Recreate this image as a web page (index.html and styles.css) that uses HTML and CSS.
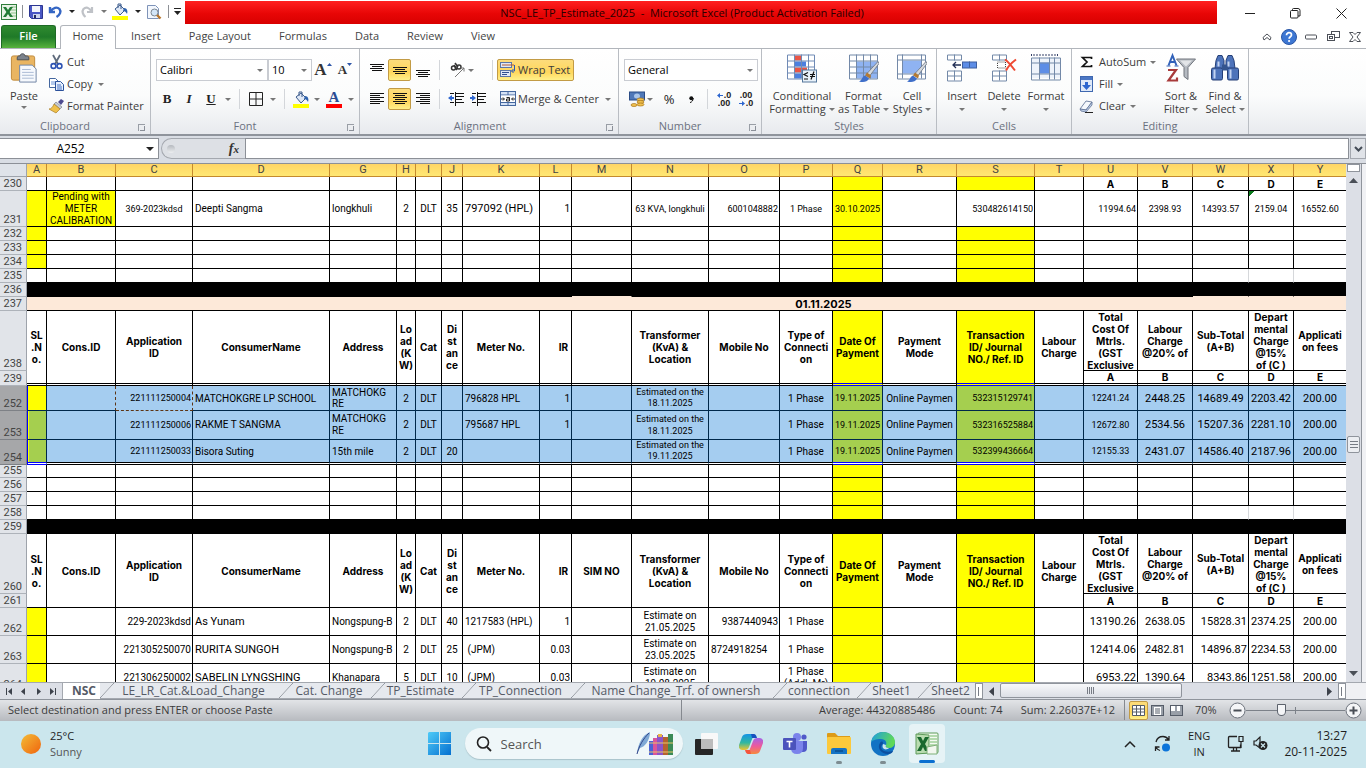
FILE: index.html
```html
<!DOCTYPE html>
<html lang="en">
<head>
<meta charset="utf-8">
<title>NSC_LE_TP_Estimate_2025 - Microsoft Excel</title>
<link rel="stylesheet" href="styles.css">
</head>
<body>
<header class="titlebar">
  <div class="qat">
    <svg class="qi" width="16" height="16" viewBox="0 0 16 16"><rect x=".5" y=".5" width="15" height="15" fill="#e8f3e6" stroke="#2f7d3b"/><path d="M10 3h5M10 6h5M10 9h5M10 12h5" stroke="#8cc088"/><path d="M2 3h3l2 3 2-3h3L8.600 8l3.400 5H9L7 10l-2 3H2l3.400-5z" fill="#217c35"/></svg>
    <i class="vsep"></i>
    <svg class="qi save" width="14" height="14" viewBox="0 0 14 14"><path d="M.5 .5h13v13h-11l-2-2z" fill="#4a57c4" stroke="#2c3691"/><rect x="3" y="1" width="8" height="6" fill="#f3f5fb"/><rect x="4" y="9" width="7" height="4" fill="#cdd5ee"/><rect x="5" y="10" width="2" height="3" fill="#222a5c"/></svg>
    <svg class="qi undo" width="15" height="14" viewBox="0 0 15 14"><path d="M2 2v5h5M2.500 6.500C5 2.500 9 1.500 11.500 4c2 2.500.5 6-3 8" fill="none" stroke="#3566c4" stroke-width="2.400"/></svg>
    <i class="arr dark"></i>
    <svg class="qi redo" width="15" height="14" viewBox="0 0 15 14"><path d="M12 2v5H7M11.500 6.500C9 2.500 6 1.500 3.500 4c-2 2.500-.5 6 2 8" fill="none" stroke="#bfc2c7" stroke-width="2.200"/></svg>
    <i class="arr"></i>
    <svg class="qi fill" width="17" height="17" viewBox="0 0 17 17"><path d="M3 6l5-4 5 5-5 5z" fill="#dfe8f6" stroke="#3b5b8c"/><path d="M6 5V1h3v5" fill="none" stroke="#3b5b8c"/><path d="M12 5c3 0 4 3 3 6-1-2-2-3-4-3z" fill="#2e62ad"/><rect x="0" y="13" width="16" height="4" fill="#ff0"/></svg>
    <i class="arr dark"></i>
    <svg class="qi prev" width="16" height="16" viewBox="0 0 16 16"><path d="M1.500 1.500h8l3 3v10h-11z" fill="#f3f7fd" stroke="#7e93b8"/><circle cx="8.500" cy="8.500" r="3.500" fill="#d3e6f8" stroke="#7d8793"/><path d="M11 11l3.500 3.500" stroke="#b8762c" stroke-width="2.400"/></svg>
    <i class="vsep"></i>
    <svg class="qi more" width="7" height="9" viewBox="0 0 7 9"><path d="M0 1.500h7" stroke="#222"/><path d="M0 4h7L3.500 8z" fill="#222"/></svg>
  </div>
  <h1 class="caption">NSC_LE_TP_Estimate_2025&nbsp; -&nbsp; Microsoft Excel (Product Activation Failed)</h1>
  <div class="winbtns">
    <button aria-label="Minimize"><svg width="11" height="11" viewBox="0 0 11 11"><path d="M0 5.500h10" stroke="#222"/></svg></button>
    <button aria-label="Restore"><svg width="11" height="11" viewBox="0 0 11 11"><rect x=".5" y="2.500" width="7.500" height="7.500" rx="1" fill="none" stroke="#222"/><path d="M2.500 2.500v-1q0-1 1-1H8q2 0 2 2v5.500h-2" fill="none" stroke="#222"/></svg></button>
    <button aria-label="Close"><svg width="11" height="11" viewBox="0 0 11 11"><path d="M.5.5l10 10M10.500.5l-10 10" stroke="#222"/></svg></button>
  </div>
</header>

<nav class="tabs">
  <button class="tab file">File</button>
  <button class="tab home">Home</button>
  <button class="tab">Insert</button>
  <button class="tab">Page Layout</button>
  <button class="tab">Formulas</button>
  <button class="tab">Data</button>
  <button class="tab">Review</button>
  <button class="tab">View</button>
  <div class="tabtools">
    <button aria-label="Collapse ribbon"><svg width="10" height="8" viewBox="0 0 10 8"><path d="M1 4.500L5 1l4 3.500L8 7 5 4.500 2 7z" fill="#fff" stroke="#4c5058"/></svg></button>
    <button aria-label="Help"><svg width="16" height="16" viewBox="0 0 16 16"><circle cx="8" cy="8" r="7.500" fill="#3d77d3" stroke="#2a56a5"/><path d="M5.500 6.200C5.500 2.800 10.500 3 10.500 6c0 1.800-2.400 1.800-2.400 3.800" fill="none" stroke="#fff" stroke-width="1.700"/><circle cx="8.100" cy="12" r="1.100" fill="#fff"/></svg></button>
    <button aria-label="Minimize workbook"><svg width="12" height="6" viewBox="0 0 12 6"><rect x=".5" y="1" width="11" height="4" rx="1" fill="#fff" stroke="#4c5058"/></svg></button>
    <button aria-label="Restore workbook"><svg width="13" height="11" viewBox="0 0 13 11"><rect x="4.500" y=".5" width="8" height="6" fill="#fff" stroke="#4c5058"/><rect x=".5" y="3.500" width="7" height="6" fill="#fff" stroke="#4c5058"/><rect x="2.500" y="5.500" width="3" height="2" fill="none" stroke="#4c5058"/></svg></button>
    <button aria-label="Close workbook"><svg width="12" height="10" viewBox="0 0 12 10"><path d="M.5.5H4l2 2 2-2h3.500L8 5l3.500 4.500H8l-2-2-2 2H.5L4 5z" fill="#fff" stroke="#4c5058"/></svg></button>
  </div>
</nav>

<section class="ribbon">
  <div class="group clipboard">
    <div class="gbody">
      <button class="big paste">
        <svg width="28" height="32" viewBox="0 0 28 32"><rect x="1" y="3" width="24" height="25" rx="2" fill="#e9b562" stroke="#c08a3b"/><path d="M7 5c0-2 2-2 3-2 0-3 5-3 5 0 2 0 4 0 4 2v2H7z" fill="#7c838c" stroke="#4a4f57"/><path d="M9.500 12.500h13l4 4V30h-17z" fill="#f6f9fd" stroke="#7184a4"/><path d="M12 17h9M12 20h12M12 23h12M12 26h12" stroke="#a9bad4"/></svg>
        <span>Paste</span><i class="arr"></i>
      </button>
      <div class="stack">
        <button class="small"><svg width="16" height="16" viewBox="0 0 16 16"><path d="M4 1l5 9M11 1L6 10" stroke="#5f6b7c" stroke-width="1.800"/><circle cx="4.500" cy="12" r="2.400" fill="none" stroke="#2d53b3" stroke-width="1.600"/><circle cx="10.500" cy="12" r="2.400" fill="none" stroke="#2d53b3" stroke-width="1.600"/></svg>Cut</button>
        <button class="small"><svg width="16" height="16" viewBox="0 0 16 16"><path d="M.5 2.500h6l3 3v6h-9z" fill="#fff" stroke="#44679f"/><path d="M2 6h5M2 8h5" stroke="#6c96d8"/><path d="M6.500 5.500h5l3 3v6h-8z" fill="#e8f0fc" stroke="#2b519b"/><path d="M8 9h4M8 11h5M8 13h5" stroke="#4773c4"/></svg>Copy<i class="arr"></i></button>
        <button class="small"><svg width="16" height="16" viewBox="0 0 16 16"><path d="M9 4l3-3 3 2-3 4z" fill="#4d4a8f"/><path d="M7 4l6 5-2 2-6-5z" fill="#c7ccd4" stroke="#6d7480" stroke-width=".6"/><path d="M5 6l6 5-4 4-7-4c2 0 4-2 5-5z" fill="#efc04b" stroke="#a97e24" stroke-width=".7"/></svg>Format Painter</button>
      </div>
    </div>
    <div class="glabel"><span>Clipboard</span><i class="launch"></i></div>
  </div>

  <div class="group font">
    <div class="gbody rows">
      <div class="row">
        <label class="combo face"><select aria-label="Font"><option>Calibri</option></select><i class="arr"></i></label><label class="combo size"><select aria-label="Font size"><option>10</option></select><i class="arr"></i></label>
        <button class="tb w22 grow" aria-label="Grow font">A<svg width="5" height="3" viewBox="0 0 5 3"><path d="M0 3h5L2.500 0z" fill="#2e56a8"/></svg></button>
        <button class="tb w22 grow sm" aria-label="Shrink font">A<svg width="5" height="3" viewBox="0 0 5 3"><path d="M0 0h5L2.500 3z" fill="#2e56a8"/></svg></button>
      </div>
      <div class="row">
        <button class="tb w22 serif b">B</button><button class="tb w22 serif it">I</button><button class="tb w22 serif un">U</button><button class="tb w12" aria-label="Underline options"><i class="arr"></i></button>
        <i class="rsep"></i>
        <button class="tb w22" aria-label="Borders"><svg width="14" height="14" viewBox="0 0 14 14"><path d="M.5.5h13v13H.5zM7 0v14M0 7h14" fill="none" stroke="#222"/></svg></button><button class="tb w12" aria-label="Border options"><i class="arr"></i></button>
        <i class="rsep"></i>
        <button class="tb w22" aria-label="Fill colour"><svg width="17" height="17" viewBox="0 0 17 17"><path d="M3 6l5-4 5 5-5 5z" fill="#dfe8f6" stroke="#3b5b8c"/><path d="M6 5V1h3v5" fill="none" stroke="#3b5b8c"/><path d="M12 5c3 0 4 3 3 6-1-2-2-3-4-3z" fill="#2e62ad"/><rect y="13" width="16" height="4" fill="#ff0"/></svg></button><button class="tb w10" aria-label="Fill options"><i class="arr"></i></button>
        <button class="tb fcol" aria-label="Font colour">A</button><button class="tb w10" aria-label="Font colour options"><i class="arr"></i></button>
      </div>
    </div>
    <div class="glabel"><span>Font</span><i class="launch"></i></div>
  </div>

  <div class="group align">
    <div class="gbody rows">
      <div class="row">
        <button class="tb w23" aria-label="Top align"><svg width="14" height="14" viewBox="0 0 14 14"><path d="M0 1.500h14M2 3.500h10M0 5.500h14M2 7.500h10" stroke="#111"/></svg></button>
        <button class="tb w23 on" aria-label="Middle align"><svg width="14" height="14" viewBox="0 0 14 14"><path d="M0 4.500h14M2 6.500h10M0 8.500h14M2 10.500h10" stroke="#111"/></svg></button>
        <button class="tb w23" aria-label="Bottom align"><svg width="14" height="14" viewBox="0 0 14 14"><path d="M0 7.500h14M2 9.500h10M0 11.500h14M2 13.500h10" stroke="#111"/></svg></button>
        <i class="rsep"></i>
        <button class="tb w34" aria-label="Orientation"><svg width="16" height="16" viewBox="0 0 16 16"><g fill="none" stroke="#333" stroke-width="1.500"><circle cx="3.500" cy="6" r="2"/><path d="M4 3l3 5"/><circle cx="9" cy="5" r="2"/><path d="M5 1l3 4"/></g><path d="M5 15L14 6M10.500 6H14v3.500" fill="none" stroke="#777"/></svg><i class="arr"></i></button>
        <i class="rsep tall"></i>
        <button class="tb wide on"><svg width="16" height="16" viewBox="0 0 16 16"><rect x=".5" y=".5" width="11" height="5" fill="#dfe8f6" stroke="#5b77a6"/><path d="M2 3h12" stroke="#b35a2d"/><rect x=".5" y="8.500" width="10" height="6" fill="#dfe8f6" stroke="#5b77a6"/><path d="M2 10.500h7M2 12.500h5" stroke="#2f4f8f"/><path d="M14.500 3v6h-3m2-2l-2 2 2 2" fill="none" stroke="#2c58b8"/></svg>Wrap Text</button>
      </div>
      <div class="row">
        <button class="tb w23" aria-label="Align left"><svg width="14" height="14" viewBox="0 0 14 14"><path d="M0 1.500h14M0 3.500h10M0 5.500h14M0 7.500h10M0 9.500h14M0 11.500h10" stroke="#111"/></svg></button>
        <button class="tb w23 on" aria-label="Centre"><svg width="14" height="14" viewBox="0 0 14 14"><path d="M0 1.500h14M2 3.500h10M0 5.500h14M2 7.500h10M0 9.500h14M2 11.500h10" stroke="#111"/></svg></button>
        <button class="tb w23" aria-label="Align right"><svg width="14" height="14" viewBox="0 0 14 14"><path d="M0 1.500h14M4 3.500h10M0 5.500h14M4 7.500h10M0 9.500h14M4 11.500h10" stroke="#111"/></svg></button>
        <i class="rsep"></i>
        <button class="tb w22" aria-label="Decrease indent"><svg width="16" height="14" viewBox="0 0 16 14"><path d="M2 1.500h4M8 1.500h8M7 4.500h9M7 7.500h7M8 10.500h8M2 10.500h4M7.500 0v14" stroke="#111"/><path d="M0 6l4-3v2h2v2H4v2z" fill="#2d66cf"/></svg></button>
        <button class="tb w22" aria-label="Increase indent"><svg width="16" height="14" viewBox="0 0 16 14"><path d="M2 1.500h4M8 1.500h8M7 4.500h9M7 7.500h7M8 10.500h8M2 10.500h4M7.500 0v14" stroke="#111"/><path d="M6 6L2 3v2H0v2h2v2z" fill="#2d66cf"/></svg></button>
        <i class="gap"></i>
        <button class="tb wide"><svg width="16" height="16" viewBox="0 0 16 16"><rect x=".5" y=".5" width="15" height="14" fill="#d5e2f5" stroke="#44679f"/><path d="M8 0v4M8 12v3M0 4h16M0 11.500h16" stroke="#44679f"/><rect x="1" y="4.500" width="14" height="6.500" fill="#fff"/><path d="M1 8h3M15 8h-3M3 6.500L4.500 8 3 9.500M13 6.500L11.500 8 13 9.500M6.500 6.500h3v3.500h-3V8h3" fill="none" stroke="#222"/></svg>Merge &amp; Center<i class="arr"></i></button>
      </div>
    </div>
    <div class="glabel"><span>Alignment</span><i class="launch"></i></div>
  </div>

  <div class="group number">
    <div class="gbody rows">
      <div class="row"><label class="combo fmt"><select aria-label="Number format"><option>General</option></select><i class="arr"></i></label></div>
      <div class="row">
        <button class="tb w34" aria-label="Accounting format"><svg width="16" height="16" viewBox="0 0 16 16"><rect x=".5" y="1" width="15" height="8" fill="#4f78b8" stroke="#2b4c86"/><ellipse cx="8" cy="5" rx="3" ry="2.500" fill="#a9c5ea"/><g fill="#f1c14d" stroke="#a8761e" stroke-width=".7"><ellipse cx="11.500" cy="8.500" rx="3.500" ry="1.500"/><ellipse cx="11.500" cy="11" rx="3.500" ry="1.500"/><ellipse cx="11.500" cy="13.500" rx="3.500" ry="1.500"/><ellipse cx="5" cy="14" rx="3" ry="1.500"/></g></svg><i class="arr"></i></button>
        <button class="tb w22 pct">%</button>
        <button class="tb w22 comma" aria-label="Comma style"><svg width="5" height="7" viewBox="0 0 5 7"><circle cx="2.300" cy="2.200" r="2" fill="#111"/><path d="M4.200 2C4.200 4.500 3 6 1 6.600" fill="none" stroke="#111"/></svg></button>
        <i class="rsep"></i>
        <button class="tb w22 dec" aria-label="Increase decimal"><span><svg width="6" height="5" viewBox="0 0 6 5"><path d="M0 2.500L3 0v2h3v1H3v2z" fill="#2d66cf"/></svg>.0</span><span>.00</span></button>
        <button class="tb w22 dec" aria-label="Decrease decimal"><span>.00</span><span><svg width="6" height="5" viewBox="0 0 6 5"><path d="M6 2.500L3 0v2H0v1h3v2z" fill="#2d66cf"/></svg>.0</span></button>
      </div>
    </div>
    <div class="glabel"><span>Number</span><i class="launch"></i></div>
  </div>

  <div class="group styles">
    <div class="gbody">
      <button class="big w72"><svg width="30" height="30" viewBox="0 0 30 30"><path d="M.5 1.500h27v24H.5z" fill="#fff"/><rect x="8" y="2" width="6" height="5" fill="#ea5545"/><rect x="8" y="8" width="11" height="5" fill="#4b7fe0"/><rect x="8" y="14" width="12" height="5" fill="#ea5545"/><rect x="8" y="20" width="6" height="5" fill="#4b7fe0"/><path d="M.5 1.500h27v24H.5zM.5 7.500h27M.5 13.500h27M.5 19.500h27M7.500 1v24M14.500 1v24M21.500 1v24" fill="none" stroke="#6f8ab5"/><rect x="15.500" y="16.500" width="14" height="12" fill="#e9f2fa" stroke="#55779b"/><path d="M21 19l-4 2 4 2M17 25.500h4M23 21h5M23 23h5M27 18l-3 8" fill="none" stroke="#111" stroke-width="1.200"/></svg><span>Conditional<br>Formatting <i class="arr"></i></span></button>
      <button class="big w50"><svg width="30" height="30" viewBox="0 0 30 30"><path d="M.5 1.500h28v24H.5z" fill="#fff"/><rect x="8" y="8" width="20" height="17" fill="#8fb3f2"/><path d="M.5 1.500h28v24H.5zM.5 7.500h28M.5 13.500h28M.5 19.500h28M7.500 1v24M14.500 1v24M21.500 1v24" fill="none" stroke="#7389a8"/><path d="M29 8l1 2-9 12-3-2z" fill="#d3d8de" stroke="#6c7480" stroke-width=".8"/><path d="M18 19l4 3-1 3-5-3z" fill="#b37a33"/><path d="M16 22l4 3c-2 4-6 4-10 3 3-1 3-5 6-6z" fill="#3f6fc9"/></svg><span>Format<br>as Table <i class="arr"></i></span></button>
      <button class="big w46"><svg width="30" height="30" viewBox="0 0 30 30"><path d="M.5 1.500h28v24H.5z" fill="#fff"/><rect x="6" y="7" width="18" height="13" fill="#8fb3f2"/><path d="M.5 1.500h28v24H.5zM.5 6.500h28M.5 20.500h28M5.500 1v24M24.500 1v24" fill="none" stroke="#7389a8"/><path d="M29 8l1 2-9 12-3-2z" fill="#d3d8de" stroke="#6c7480" stroke-width=".8"/><path d="M18 19l4 3-1 3-5-3z" fill="#b37a33"/><path d="M16 22l4 3c-2 4-6 4-10 3 3-1 3-5 6-6z" fill="#3f6fc9"/></svg><span>Cell<br>Styles <i class="arr"></i></span></button>
    </div>
    <div class="glabel"><span>Styles</span></div>
  </div>

  <div class="group cells">
    <div class="gbody">
      <button class="big w42"><svg width="30" height="30" viewBox="0 0 30 30"><path d="M.5 1.500h14v5H.5zM7.500 1v6M.5 17.500h14v10H.5zM7.500 17v10M.5 22.500h14" fill="#fff" stroke="#7389a8"/><rect x="15.500" y="8.500" width="14" height="6" fill="#5d8de6" stroke="#3d5f9f"/><path d="M22.500 8v6" stroke="#3d5f9f"/><path d="M6 11.500h8M9 8.500l-3 3 3 3" fill="none" stroke="#222f55" stroke-width="1.300"/></svg><span>Insert<br><i class="arr"></i></span></button>
      <button class="big w42"><svg width="30" height="30" viewBox="0 0 30 30"><path d="M3.500 1.500h14v5h-14zM10.500 1v6M3.500 17.500h14v10h-14zM10.500 17v10M3.500 22.500h14" fill="#fff" stroke="#7389a8"/><rect x="8.500" y="8.500" width="8" height="6" fill="none" stroke="#444" stroke-dasharray="1 1"/><path d="M16 6c4 3 7 7 10 11M27 6c-4 3-8 7-10 11" fill="none" stroke="#ee4a33" stroke-width="2"/></svg><span>Delete<br><i class="arr"></i></span></button>
      <button class="big w42"><svg width="30" height="30" viewBox="0 0 30 30"><path d="M.5.5v3M26.500.5v3M2 1.500h24" stroke="#333f66" stroke-dasharray="2 1"/><path d="M.5 4.500h29v20H.5z" fill="#eef3fb"/><rect x="9" y="9" width="9" height="11" fill="#5d8de6"/><path d="M.5 4.500h29v22H.5zM.5 9.500h29M.5 20.500h29M8.500 4v22M18.500 4v22M23.500 4v22" fill="none" stroke="#7389a8"/></svg><span>Format<br><i class="arr"></i></span></button>
    </div>
    <div class="glabel"><span>Cells</span></div>
  </div>

  <div class="group editing">
    <div class="gbody">
      <div class="stack">
        <button class="small"><svg width="16" height="16" viewBox="0 0 16 16"><path d="M12.500 5V3.500h-9L8 8l-4.500 4.500h9V11" fill="none" stroke="#111" stroke-width="1.700"/></svg>AutoSum<i class="arr"></i></button>
        <button class="small"><svg width="16" height="16" viewBox="0 0 16 16"><rect x="1.500" y=".5" width="12" height="15" fill="#dfe9f8" stroke="#3f68b0"/><rect x="2" y="1" width="11" height="3" fill="#4c77c4"/><path d="M6 6h3v3h3l-4.500 5L3 9h3z" fill="#2d66cf"/></svg>Fill<i class="arr"></i></button>
        <button class="small"><svg width="16" height="16" viewBox="0 0 16 16"><path d="M1 11l6-8 6 1-6 8z" fill="#f5f8fc" stroke="#7787a5"/><path d="M1 11l6 1 6-8v3l-6 7-5-1z" fill="#c4d3ea" stroke="#5e7196" stroke-width=".8"/><path d="M6 14.500h8" stroke="#222"/></svg>Clear<i class="arr"></i></button>
      </div>
      <button class="big w46"><svg width="30" height="30" viewBox="0 0 30 30"><g fill="none" stroke="#3262b9" stroke-width="2"><path d="M2.500 12L6.500 2l4 10M4 8.500h5" /><path d="M.5 12.500h4M8.500 12.500h4" stroke-width="1.200"/></g><path d="M2 16.500h8L2.500 27H11v-3" fill="none" stroke="#a83a3a" stroke-width="2.200"/><path d="M10.500 5.500h19L22 14v12l-4-3v-9z" fill="#b5bac1" stroke="#70757d"/><path d="M14 7h12l-6 6z" fill="#e3e5e8"/></svg><span>Sort &amp;<br>Filter <i class="arr"></i></span></button>
      <button class="big w42"><svg width="30" height="30" viewBox="0 0 30 30"><g fill="#4d73ba" stroke="#243f77"><path d="M6 7l2-5h4l2 5v8H5zM16 7l2-5h4l2 5 1 8h-9z"/><rect x="1.500" y="14.500" width="11" height="12" rx="1.500"/><rect x="17.500" y="14.500" width="11" height="12" rx="1.500"/></g><rect x="12" y="11" width="6" height="6" fill="#34548f"/><path d="M4.500 16v9M20.500 16v9M8.500 8v5M18.500 8v5" stroke="#c3d4f1" stroke-width="2"/></svg><span>Find &amp;<br>Select <i class="arr"></i></span></button>
    </div>
    <div class="glabel"><span>Editing</span></div>
  </div>
</section>

<section class="formulabar">
  <div class="namebox"><input aria-label="Name box" value="A252"><button aria-label="Name list"><i class="arr dark"></i></button></div>
  <div class="fxarea"><i class="knob"></i><button class="fx">f<small>x</small></button></div>
  <input class="formula" aria-label="Formula bar">
  <button class="expand" aria-label="Expand formula bar"><svg width="9" height="6" viewBox="0 0 9 6"><path d="M1 1l3.500 3.500L8 1" fill="none" stroke="#444c57" stroke-width="2"/></svg></button>
</section>

<main class="sheetarea">
  <div class="gridwrap">
    <table class="grid" id="grid"></table>
  </div>
  <div class="vscroll">
    <i class="split"></i>
    <button aria-label="Scroll up"><svg width="9" height="5" viewBox="0 0 9 5"><path d="M0 5h9L4.500 0z" fill="#4a4f57"/></svg></button>
    <div class="track"><i class="thumb"></i></div>
    <button aria-label="Scroll down"><svg width="9" height="5" viewBox="0 0 9 5"><path d="M0 0h9L4.500 5z" fill="#4a4f57"/></svg></button>
  </div>
</main>

<div class="sheettabs">
  <div class="navs">
    <button aria-label="First sheet"><svg width="7" height="7" viewBox="0 0 7 7"><path d="M.5 0v7" stroke="#3d424b"/><path d="M6 0v7L2 3.500z" fill="#3d424b"/></svg></button>
    <button aria-label="Previous sheet"><svg width="7" height="7" viewBox="0 0 7 7"><path d="M5 0v7L1 3.500z" fill="#3d424b"/></svg></button>
    <button aria-label="Next sheet"><svg width="7" height="7" viewBox="0 0 7 7"><path d="M2 0v7l4-3.500z" fill="#3d424b"/></svg></button>
    <button aria-label="Last sheet"><svg width="7" height="7" viewBox="0 0 7 7"><path d="M6.500 0v7" stroke="#3d424b"/><path d="M1 0v7l4-3.500z" fill="#3d424b"/></svg></button>
  </div>
  <button class="stab active">NSC</button>
  <button class="stab t179">LE_LR_Cat.&amp;Load_Change</button>
  <button class="stab t92">Cat. Change</button>
  <button class="stab t91">TP_Estimate</button>
  <button class="stab t109">TP_Connection</button>
  <button class="stab t202">Name Change_Trf. of ownersh</button>
  <button class="stab t84">connection</button>
  <button class="stab t61">Sheet1</button>
  <button class="stab t57">Sheet2</button>
  <div class="hscroll">
    <i class="split"></i>
    <button aria-label="Scroll left"><svg width="5" height="9" viewBox="0 0 5 9"><path d="M5 0v9L0 4.500z" fill="#3d424b"/></svg></button>
    <div class="track"><i class="thumb"></i></div>
    <button aria-label="Scroll right"><svg width="5" height="9" viewBox="0 0 5 9"><path d="M0 0v9l5-4.500z" fill="#3d424b"/></svg></button>
    <i class="split"></i>
  </div>
  <i class="corner"></i>
</div>

<footer class="status">
  <span class="msg">Select destination and press ENTER or choose Paste</span>
  <div class="stats"><span>Average: 44320885486</span><span>Count: 74</span><span>Sum: 2.26037E+12</span></div>
  <div class="views">
    <button class="on" aria-label="Normal view"><svg width="13" height="11" viewBox="0 0 13 11"><path d="M.5.5h12v10H.5zM0 4h13M0 7h13M4.500 0v11M8.500 0v11" fill="#fff" stroke="#555c68"/></svg></button>
    <button aria-label="Page layout view"><svg width="13" height="11" viewBox="0 0 13 11"><rect x=".5" y=".5" width="12" height="10" fill="#999fa8" stroke="#555c68"/><rect x="3" y="2" width="7" height="8" fill="#fff"/><path d="M4 4h5M4 6h5M4 8h5" stroke="#555c68"/></svg></button>
    <button aria-label="Page break view"><svg width="13" height="11" viewBox="0 0 13 11"><rect x=".5" y=".5" width="12" height="10" fill="#999fa8" stroke="#555c68"/><path d="M1 1h4v5H1zM7 1h3v5H7z" fill="#fff"/></svg></button>
  </div>
  <span class="pct70">70%</span>
  <button class="zoombtn" aria-label="Zoom out"><svg width="17" height="17" viewBox="0 0 17 17"><circle cx="8.500" cy="8.500" r="7.500" fill="#f4f5f7" stroke="#6c727c"/><path d="M4.500 8.500h8" stroke="#4a4f57" stroke-width="2"/></svg></button>
  <input class="zoom" type="range" aria-label="Zoom" min="0" max="100" value="34">
  <button class="zoombtn" aria-label="Zoom in"><svg width="17" height="17" viewBox="0 0 17 17"><circle cx="8.500" cy="8.500" r="7.500" fill="#f4f5f7" stroke="#6c727c"/><path d="M4.500 8.500h8M8.500 4.500v8" stroke="#4a4f57" stroke-width="2"/></svg></button>
</footer>

<div class="taskbar">
  <div class="weather">
    <svg width="20" height="20" viewBox="0 0 20 20"><defs><linearGradient id="sun" x1="0" y1="0" x2="1" y2="1"><stop offset="0" stop-color="#f3bd38"/><stop offset="1" stop-color="#f0630d"/></linearGradient></defs><circle cx="10" cy="10" r="10" fill="url(#sun)"/></svg>
    <p>25°C<br><span>Sunny</span></p>
  </div>
  <div class="center">
    <button class="app start" aria-label="Start"><svg width="24" height="24" viewBox="0 0 24 24"><defs><linearGradient id="win" x1="0" y1="0" x2="1" y2="1"><stop offset="0" stop-color="#4fcbf8"/><stop offset="1" stop-color="#0470d0"/></linearGradient></defs><path d="M1 0h10v11H0V1zM12 0h11v11H12zM0 12h11v11H0zM12 12h11v11H12z" fill="url(#win)"/></svg></button>
    <label class="search">
      <svg width="16" height="16" viewBox="0 0 16 16"><circle cx="7" cy="6.500" r="5.500" fill="none" stroke="#222" stroke-width="1.600"/><path d="M11 11l4 4" stroke="#222" stroke-width="1.800"/></svg>
      <input type="text" placeholder="Search" aria-label="Search">
      <svg width="38" height="26" viewBox="0 0 38 26"><path d="M1 23C2 13 6 4 14 1 14 9 9 16 4 17z" fill="#7fa9d6"/><path d="M1 23C3 15 7 8 13 2" fill="none" stroke="#33478a"/><rect x="13" y="10" width="4" height="14" fill="#4a63d8"/><rect x="17" y="7" width="4" height="17" fill="#d9559c"/><rect x="21" y="4" width="6" height="20" fill="#8b55c9"/><path d="M22 3h4v3h-4z" fill="#e8b547"/><rect x="27" y="6" width="5" height="18" fill="#b4632f"/><rect x="32" y="3" width="5" height="21" fill="#3b8a57"/><path d="M13 12h24M13 21h24" stroke="#e8c66a"/></svg>
    </label>
    <button class="app" aria-label="Task view"><svg width="24" height="24" viewBox="0 0 24 24"><rect x="6" y="1" width="17" height="16" rx="1" fill="#f8f8f8"/><rect x="0" y="7" width="18" height="16" rx="1" fill="#262626"/><rect x="6" y="7" width="12" height="10" fill="#bcbcbc"/></svg></button>
    <button class="app" aria-label="Copilot"><svg width="24" height="24" viewBox="0 0 24 24"><defs><linearGradient id="cpa" x1="0" y1="0" x2="0" y2="1"><stop offset="0" stop-color="#1593e6"/><stop offset=".55" stop-color="#31b8a0"/><stop offset="1" stop-color="#f2c42e"/></linearGradient><linearGradient id="cpb" x1="0" y1="0" x2="0" y2="1"><stop offset="0" stop-color="#a463e8"/><stop offset=".5" stop-color="#ec5a9d"/><stop offset="1" stop-color="#f78a3c"/></linearGradient></defs><path d="M8 2h7l-5 13q-1 3-4 3H3q-4-1-3-5L3 5q1-3 5-3z" fill="url(#cpa)"/><path d="M12 2h3q2 0 3 4h-5z" fill="#1750bf"/><path d="M16 22H9l5-13q1-3 4-3h3q4 1 3 5l-3 8q-1 3-5 3z" fill="url(#cpb)"/><path d="M12 22H9q-2 0-3-4h5z" fill="#f5543d"/></svg></button>
    <button class="app" aria-label="Teams"><svg width="24" height="24" viewBox="0 0 24 24"><circle cx="14" cy="5" r="4" fill="#7b83eb"/><circle cx="21" cy="5" r="2.600" fill="#5059c9"/><path d="M17 9h7v7q0 4-4 4h-3z" fill="#5059c9"/><path d="M8 9h12v7q0 6-6 6t-6-6z" fill="#7b83eb"/><rect x="0" y="6" width="13" height="12" rx="1" fill="#4b53bc"/><path d="M3.500 9.500h6M6.500 9.500v6" stroke="#fff" stroke-width="1.600"/></svg></button>
    <button class="app run" aria-label="File Explorer"><svg width="24" height="24" viewBox="0 0 24 24"><path d="M0 2q0-1 1-1h7l3 3h12v6H0z" fill="#dd9b18"/><rect y="5" width="24" height="17" rx="1" fill="#fcc93c"/><path d="M4 22v-4q0-2 2-2h12q2 0 2 2v4z" fill="#1573c4"/><path d="M8 19h8" stroke="#0b4d8c" stroke-width="1.500"/></svg></button>
    <button class="app run" aria-label="Edge"><svg width="24" height="24" viewBox="0 0 24 24"><defs><linearGradient id="edg" x1="0" y1="0" x2="1" y2=".3"><stop offset="0" stop-color="#1b9de2"/><stop offset="1" stop-color="#5fd958"/></linearGradient></defs><circle cx="12" cy="12" r="12" fill="#1272c4"/><path d="M0 11C1 4 6 0 12 0c7 0 12 5 12 10 0 4-3 6-6 6s-4-1-3-3 0-6-5-6S1 8 0 11z" fill="url(#edg)"/><path d="M9 11c-3 4 0 11 8 11 3 0 5-2 5-3-8 2-12-1-12-4 0-2 2-2 2-4s-2-2-3 0z" fill="#0c4fa0"/><path d="M15 13c-1 2 0 3 3 3-3 3-8 1-6-4z" fill="#cbe6ed"/></svg></button>
    <button class="app current" aria-label="Excel"><svg width="24" height="24" viewBox="0 0 24 24"><rect x="3" y="1" width="20" height="20" rx="1" fill="#f4faf2" stroke="#5e9b5a"/><path d="M15 4h7M15 7h7M15 10h7M15 13h7" stroke="#9fcf98" stroke-width="1.500"/><path d="M1 2l13 1v18L1 22z" fill="#b9dcb0" stroke="#5e9b5a"/><path d="M2 5h4l2 4 2-4h4l-4 7 4 7h-4l-2-4-2 4H2l4-7z" fill="#19692e"/><path d="M12 15l10-2v9H12z" fill="#f2f7ef" stroke="#7fb078"/></svg></button>
  </div>
  <div class="tray">
    <svg class="up" width="12" height="8" viewBox="0 0 12 8"><path d="M1 7l5-5 5 5" fill="none" stroke="#222" stroke-width="1.500"/></svg>
    <svg class="sync" width="17" height="17" viewBox="0 0 17 17"><path d="M2 7C3 3 6 1.500 9 1.500c2.500 0 4 1 5.500 3M15 1v4h-4M1.500 16v-4h4M2 12.500c1 1.500 2.500 2.500 4 3" fill="none" stroke="#222" stroke-width="1.300"/><circle cx="12" cy="12.500" r="4" fill="#0a74da"/></svg>
    <p class="lang">ENG<br>IN</p>
    <svg class="net" width="17" height="17" viewBox="0 0 17 17"><path d="M10 1.500H2.500q-1 0-1 1v9q0 1 1 1h11v-3M4 16h9M6.500 12.500V16M9.500 12.500V16" fill="none" stroke="#222" stroke-width="1.300"/><path d="M12 1.500h4v5h-4zM14 6.500V13" fill="none" stroke="#222" stroke-width="1.200"/></svg>
    <svg class="vol" width="15" height="15" viewBox="0 0 15 15"><path d="M1 5h2l4-4v11L3 9H1z" fill="none" stroke="#222" stroke-width="1.200"/><circle cx="10" cy="9.500" r="4.500" fill="#222"/><path d="M8 7.500l4 4M12 7.500l-4 4" stroke="#cbe6ed" stroke-width="1.200"/></svg>
    <p class="clock">13:27<br>20-11-2025</p>
  </div>
</div>
<script src="grid.js"></script>
</body>
</html>
```
FILE: styles.css
```css
* { box-sizing: border-box; }
html, body { height: 100%; margin: 0; }
body { display: flex; flex-direction: column; overflow: hidden; background: #fff; color: #3b3b3b; font: 11px/14px "Open Sans", "Noto Sans", sans-serif; }
button, input, select { font: inherit; color: inherit; background: none; border: 0; padding: 0; margin: 0; outline: 0; }
button { display: flex; align-items: center; justify-content: center; }
svg { display: block; flex: none; }
p, h1 { margin: 0; }

.arr { flex: none; display: inline-block; width: 0; height: 0; border: 3px solid transparent; border-top: 3px solid #777; border-bottom: 0; vertical-align: 2px; }
.arr.dark { border-top-color: #222; }

/* title bar */
.titlebar { display: flex; height: 25px; flex: none; }
.qat { display: flex; align-items: center; width: 185px; padding: 0 4px 2px 1px; justify-content: space-between; flex: none; }
.vsep { width: 1px; height: 13px; background: #8d9096; }
.caption { flex: 1; margin: 1px 0; background: linear-gradient(#ff2020, #e80606 55%, #d80000); color: #2a0000; font-size: 11px; font-weight: 400; line-height: 23px; text-align: center; padding-right: 38px; }
.winbtns { display: flex; width: 149px; padding: 2px 2px 0 11px; flex: none; }
.winbtns button { flex: 1; }

/* ribbon tabs */
.tabs { display: flex; height: 24px; flex: none; border-bottom: 1px solid #b1b5bb; padding-left: 1px; }
.tab { padding: 0 14px 2px; color: #444; }
.file { width: 55px; background: linear-gradient(#2f8a2f, #1f7a28 50%, #58b33e); border: 1px solid #1e6a26; border-bottom: 0; border-radius: 3px 3px 0 0; color: #fff; font-weight: 600; }
.home { width: 56px; margin: 0 1px -1px 4px; background: #fff; border: 1px solid #b1b5bb; border-bottom: 0; border-radius: 3px 3px 0 0; padding: 0 0 3px; }
.tabtools { display: flex; margin-left: auto; }
.tabtools button { width: 22px; }

/* ribbon */
.ribbon { display: flex; height: 87px; flex: none; background: linear-gradient(#fff, #fbfcfc 55%, #e8eaee); border-bottom: 2px solid #8f949c; }
.group { display: flex; flex-direction: column; border-right: 1px solid #b9bdc3; flex: none; }
.gbody { flex: 1; display: flex; padding-top: 2px; }
.rows { flex-direction: column; padding: 10px 0 0 5px; gap: 7px; }
.row { display: flex; height: 22px; align-items: center; }
.glabel { display: flex; height: 16px; align-items: center; color: #6b7180; position: relative; }
.glabel span { flex: 1; text-align: center; }
.launch { width: 7px; height: 7px; border: 1px solid #999ea6; border-right: 0; border-bottom: 0; position: absolute; right: 5px; top: 6px; }
.launch::after { content: ""; position: absolute; right: 0; bottom: 0; width: 4px; height: 4px; border: 1px solid #8a8f98; border-left: 0; border-top: 0; }
.clipboard { width: 151px; }
.clipboard .glabel span, .font .glabel span, .number .glabel span { padding-right: 20px; }
.align .glabel span { padding-right: 18px; }
.font { width: 209px; }
.align { width: 259px; }
.number { width: 143px; }
.styles { width: 175px; }
.cells { width: 135px; }
.editing { width: 177px; }
.big { flex-direction: column; justify-content: flex-start; line-height: 13px; height: 66px; }
.big svg { height: 31px; margin: 2px 0 5px; }
.paste { width: 40px; margin: 0 5px 0 4px; }
.paste .arr { margin-top: 4px; }
.w72 { width: 72px; margin-left: 4px; } .w50 { width: 51px; } .w46 { width: 46px; } .w42 { width: 42px; }
.cells .gbody { padding-left: 4px; }
.stack { display: flex; flex-direction: column; }
.small { height: 22px; gap: 2px; justify-content: flex-start; }
.small .arr { margin-left: 3px; }
.editing .stack { width: 78px; margin: 0 1px 0 7px; }
.editing .small { gap: 4px; }
.editing .small .arr { margin-left: 0; }

.combo { display: flex; align-items: center; height: 22px; border: 1px solid #c9ccd2; background: #fff; padding-right: 4px; color: #000; }
.combo select { appearance: none; flex: 1; width: 0; padding-left: 3px; }
.face { width: 112px; }
.size { width: 44px; }
.fmt { width: 134px; }
.tb { height: 22px; flex: none; }
.w22 { width: 22px; } .w23 { width: 23px; } .w34 { width: 34px; gap: 2px; } .w12 { width: 12px; } .w10 { width: 10px; }
.wide { gap: 2px; padding: 0 3px 0 2px; border: 1px solid transparent; }
.wide .arr { margin-left: 4px; }
.on { background: linear-gradient(#fcdc7c, #ffd75c 60%, #fff08a); border: 1px solid #c29b45; border-radius: 2px; }
.rsep { width: 1px; height: 20px; background: #d3d6da; margin: 0 5px; }
.rsep.tall { margin: 0 4px 0 13px; }
.gap { width: 8px; }
.serif { font: 700 13px/14px "Liberation Serif", serif; color: #222; }
.it { font-style: italic; } .un { text-decoration: underline; }
.grow { font: 700 17px/18px "Liberation Serif", serif; color: #333; align-items: center; }
.grow svg { align-self: flex-start; margin-top: 4px; }
.grow.sm { font-size: 13px; }
.fcol { font: 700 15px/12px "Liberation Serif", serif; color: #2b4d94; border-bottom: 4px solid #f00; width: 16px; height: 17px; margin: 0 4px; }
.pct { font-size: 13px; color: #222; }
.dec { flex-direction: column; font: 700 9px/8px "Liberation Sans", sans-serif; color: #222; }
.dec span { display: flex; align-items: center; gap: 1px; }

/* formula bar */
.formulabar { display: flex; flex: none; height: 28px; padding: 2px 0 4px; background: #d9dde4; border-bottom: 1px solid #8c9097; }
.namebox { display: flex; width: 159px; background: #fff; border: 1px solid #8c9097; border-left: 0; }
.namebox input { flex: 1; width: 0; text-align: center; color: #000; font-size: 12px; }
.namebox button { width: 17px; }
.namebox .arr { border-width: 4px; border-bottom: 0; }
.fxarea { display: flex; align-items: center; justify-content: space-between; width: 84px; margin-left: 2px; padding: 0 6px 0 5px; border: 1px solid #a4a8af; border-right: 0; border-radius: 11px 0 0 11px; background: #dde0e5; }
.knob { width: 8px; height: 8px; border-radius: 4px; background: linear-gradient(#b5b9bf, #eceef0); }
.fx { font: italic 700 14px/16px "Liberation Serif", serif; color: #333; }
.fx small { font-size: 11px; }
.formula { flex: 1; background: #fff; border: 1px solid #8c9097; }
.expand { width: 16px; margin-left: 1px; background: #e0e3e8; border: 1px solid #a4a8af; }

/* worksheet */
.sheetarea { flex: 1; display: flex; min-height: 0; }
.gridwrap { flex: 1; min-width: 0; overflow: hidden; background: #fff; }
.grid { width: 100%; table-layout: fixed; border-collapse: separate; border-spacing: 0; font: 10px/12px Roboto, "Liberation Sans", sans-serif; color: #000; }
.grid th, .grid td { padding: 0; overflow: hidden; white-space: pre; }
.c-head { width: 27px; } .cA { width: 20px; } .cB { width: 69px; } .cC, .cK, .cN { width: 77px; } .cD { width: 137px; } .cG { width: 67px; }
.cH { width: 19px; } .cI { width: 26px; } .cJ { width: 21px; } .cL { width: 32px; } .cM { width: 60px; } .cO { width: 71px; }
.cP { width: 53px; } .cQ { width: 50px; } .cR { width: 74px; } .cS { width: 78px; } .cT { width: 49px; } .cU { width: 54px; }
.cV { width: 55px; } .cW { width: 56px; } .cX { width: 45px; }
.grid thead th { height: 13px; font-weight: 400; font-size: 11px; line-height: 12px; color: #444; background: linear-gradient(#ffd566, #ffe873); border-right: 1px solid #c58a2e; border-bottom: 1px solid #c58a2e; }
.grid thead th:last-child { border-right: 0; }
.grid thead th.all { background: #dfe3e9; border-color: #9ea3ab; }
.grid tbody th { font-weight: 400; font-size: 11px; line-height: 13px; color: #444; text-align: right; vertical-align: bottom; padding-right: 4px; background: #e1e4e9; border-right: 1px solid #9ea3ab; border-bottom: 1px solid #aeb3ba; }
.grid td { border-right: 1px solid #000; border-bottom: 1px solid #000; text-align: center; vertical-align: middle; }
.grid td:last-child { border-right: 0; }
.h13 { height: 13px; } .h14 { height: 14px; } .h15 { height: 15px; } .h25 { height: 25px; } .h28 { height: 28px; } .h29 { height: 29px; } .h36 { height: 36px; } .h60 { height: 60px; }
.cell { max-height: 59px; overflow: hidden; line-height: 12px; }
.h36 .cell { max-height: 35px; }
.h25 .cell { line-height: 11px; }
.h15 .cell { line-height: 11px; }
.grid .h13 th, .grid .h14 th, .grid .h15 th { line-height: 12px; }
.grid .l { text-align: left; padding-left: 2px; }
.grid .r { text-align: right; padding-right: 1px; }
.grid .m { font-size: 11px; }
.grid .s { font-size: 9px; }
.grid .b { font-family: Inter, Roboto, sans-serif; font-weight: 700; font-size: 10px; }
.grid .b.r { padding-right: 3px; }
.grid .y { background: #ff0; }
.grid .black td { background: #000; }
.grid .black .pb { border-bottom-color: #fde9d9; }
.grid .title { background: #fde9d9; font: 700 11px/12px Inter, sans-serif; padding-left: 274px; }
.grid .lite { border-right-color: #d6d8db; }
.grid .dbl td, .grid td.dbl { border-bottom: 3px double #000; }
.grid td.dbl.y { border-bottom-color: #00f; }
.grid .sel td { background: #a5cdf0; border-color: #00284a; }
.grid .sel.dbl td { border-bottom-color: #000; background-clip: padding-box; }
.grid .sel th { background: #a6a7a9; border-color: #7e8186; }
.grid .sel td.y { background: #ff0; border-left: 1px solid #00f; }
.grid .sel td.g { background: #a5cf4f; }
.grid .sel.dbl td.g { border-bottom-color: #00f; background-clip: padding-box; }
.grid .sel td.edge { border-left: 1px solid #00f; box-shadow: inset 1px 0 #ff0; }
.grid .sel td.ants { border-right: 1px dashed #5c3313; border-bottom: 1px dashed #5c3313; }
.grid .sel td.antl { border-right: 1px dashed #5c3313; }
.grid .flag { background: linear-gradient(135deg, #0a7a1c 4px, #fff 4px); }

.vscroll { width: 20px; flex: none; display: flex; flex-direction: column; background: #dcdfe6; border-right: 4px solid #f0f1f4; box-shadow: inset -1px 0 #8f949c; padding-right: 1px; }
.vscroll button { height: 17px; }
.vscroll .split { height: 8px; margin: 0 1px; background: #fff; border: 1px solid #8f949c; }
.vscroll .track { flex: 1; padding-top: 247px; }
.vscroll .thumb { display: block; height: 17px; margin: 0 1px; border: 1px solid #8f949c; border-radius: 2px; background: repeating-linear-gradient(#777c85 0 1px, transparent 1px 3px) center / 8px 7px no-repeat, #eceef2; }

/* sheet tabs */
.sheettabs { display: flex; height: 17px; flex: none; background: #dcdfe6; border-top: 1px solid #a4a8af; color: #555a66; font-size: 12px; }
.navs { display: flex; width: 63px; padding: 0 2px; border-right: 1px solid #a4a8af; flex: none; }
.navs button { flex: 1; }
.stab { flex: none; padding-left: 8px; line-height: 15px; border-bottom: 1px solid #a4a8af; background: linear-gradient(to bottom right, #e6e9ee 47%, #8f949c 50%, #e6e9ee 53%) left / 14px 100% no-repeat, #e6e9ee; white-space: nowrap; }
.stab.active { width: 42px; padding: 0; margin-right: -5px; background: #fff; font-weight: 700; border-bottom-color: #fff; }
.t179 { width: 179px; } .t92 { width: 92px; } .t91 { width: 91px; } .t109 { width: 109px; } .t202 { width: 202px; } .t84 { width: 84px; } .t61 { width: 61px; } .t57 { width: 57px; }
.hscroll { flex: 1; display: flex; min-width: 0; }
.hscroll .split { width: 8px; background: linear-gradient(90deg, transparent 3px, #777c85 3px 4px, transparent 4px) center / 8px 9px no-repeat, #fff; border: 1px solid #8f949c; }
.hscroll button { width: 17px; }
.hscroll .track { flex: 1; }
.hscroll .thumb { display: block; width: 182px; height: 15px; border: 1px solid #8f949c; border-radius: 2px; background: repeating-linear-gradient(90deg, #777c85 0 1px, transparent 1px 2px) center / 8px 7px no-repeat, linear-gradient(#f7f8fa, #dcdfe6); }
.corner { width: 20px; background: #f0f1f4; flex: none; }

/* status bar */
.status { display: flex; align-items: center; height: 22px; flex: none; padding: 0 4px 1px 8px; background: linear-gradient(#e2e4e7, #b7babf); border-top: 1px solid #8f949c; }
.msg { flex: 1; align-self: stretch; line-height: 20px; border-right: 1px solid #85898f; }
.stats { width: 443px; display: flex; align-self: stretch; align-items: center; justify-content: flex-end; gap: 18px; padding-right: 9px; border-right: 1px solid #85898f; }
.views { display: flex; margin-left: 4px; }
.views button { width: 19px; height: 19px; }
.pct70 { margin: 0 10px 0 9px; width: 24px; }
.zoombtn { width: 17px; }
.zoom { appearance: none; width: 99px; height: 16px; background: linear-gradient(#7c8189, #7c8189) center / 100% 1px no-repeat, linear-gradient(#7c8189, #7c8189) center / 1px 7px no-repeat; }
.zoom::-webkit-slider-thumb { appearance: none; width: 9px; height: 12px; background: #f4f5f7; border: 1px solid #5c626c; border-radius: 1px 1px 5px 5px; }

/* taskbar */
.taskbar { display: grid; grid-template-columns: 1fr auto 1fr; align-items: center; height: 47px; flex: none; padding-bottom: 2px; background: #cbe6ed; color: #1f1f1f; line-height: 16px; }
.weather { display: flex; align-items: center; gap: 9px; padding-left: 21px; }
.weather span { color: #555; }
.center { display: flex; align-items: center; }
.app { width: 44px; height: 40px; position: relative; }
.start { width: 36px; margin-right: 7px; }
.search { display: flex; align-items: center; width: 218px; height: 31px; margin-right: 2px; padding: 0 9px 0 11px; border-radius: 16px; background: #eff7f9; box-shadow: 0 1px 1px #a9c3ca; gap: 9px; }
.search input { flex: 1; width: 0; font-size: 13px; }
.search input::placeholder { color: #555; opacity: 1; }
.run::after, .current::after { content: ""; position: absolute; bottom: 0; left: 19px; width: 6px; height: 3px; border-radius: 2px; background: #7d8c91; }
.current { background: #e6f3f6; border-radius: 4px; width: 36px; margin-left: 4px; height: 39px; }
.current::after { background: #0a6fd0; width: 16px; left: 10px; }
.tray { display: flex; align-items: center; justify-content: flex-end; padding-right: 19px; font-size: 12px; }
.up { margin-right: 18px; } .sync { margin-right: 17px; } .net { margin: 0 9px 0 17px; } .vol { margin-right: 16px; }
.lang { text-align: center; font-size: 11px; }
.clock { text-align: right; }
```
FILE: grid.js
```js
// Worksheet rows shown in the window: number, height class, row class, cells.
const cols = 'ABCDGHIJKLMNOPQRSTUVWXY'.split('');
const align = { D: 'l', G: 'l', K: 'l', L: 'r', C: 'r', O: 'r', S: 'r' };

const labels = {
  A: 'SL\n.N\no.', B: 'Cons.ID', C: 'Application\nID', D: 'ConsumerName', G: 'Address',
  H: 'Lo\nad\n(K\nW)', I: 'Cat', J: 'Di\nst\nan\nce', K: 'Meter No.', L: 'IR', M: '',
  N: 'Transformer\n(KvA) &\nLocation', O: 'Mobile No', P: 'Type of\nConnecti\non',
  Q: 'Date Of\nPayment', R: 'Payment\nMode', S: 'Transaction\nID/ Journal\nNO./ Ref. ID', T: 'Labour\nCharge',
  U: 'Total\nCost Of\nMtrls.\n(GST\nExclusive', V: 'Labour\nCharge\n@20% of', W: 'Sub-Total\n(A+B)',
  X: 'Depart\nmental\nCharge\n@15%\nof (C )', Y: 'Applicati\non fees'
};
const letters = { U: ['A', 'b'], V: ['B', 'b'], W: ['C', 'b'], X: ['D', 'b'], Y: ['E', 'b'] };
const yellow = { Q: ['', 'y'], S: ['', 'y'] };
const yellowA = { ...yellow, A: ['', 'y'] };
const lastEmpty = { ...yellow, W: ['', 'lite'], X: ['', 'lite'] };

const rows = [
  [230, 'h14', '', { ...yellow, ...letters }],
  [231, 'h36', '', { A: ['', 'y'], B: ['Pending with\nMETER\nCALIBRATION', 'y'], C: ['369-2023kdsd', 'ctr s'], D: 'Deepti Sangma', G: 'longkhuli', H: '2', I: 'DLT', J: '35', K: ['797092 (HPL)', 'm'], L: '1', N: ['63 KVA, longkhuli', 's'], O: ['6001048882', 's'], P: ['1 Phase', 's'], Q: ['30.10.2025', 's y'], S: ['530482614150', 's'], U: ['11994.64', 's r'], V: ['2398.93', 's'], W: ['14393.57', 's'], X: ['2159.04', 's flag'], Y: ['16552.60', 's'] }],
  [232, 'h14', '', yellowA],
  [233, 'h14', '', yellowA],
  [234, 'h14', '', yellowA],
  [235, 'h14', '', lastEmpty],
  [236, 'h14', 'black', { M: ['', 'pb'], W: ['', 'pb'], X: ['', 'pb'], Y: ['', 'pb'] }],
  [237, 'h14', 'date', {}],
  [238, 'h60', 'head', labels],
  [239, 'h15', 'sub dbl', letters],
  [252, 'h25', 'sel', { A: ['', 'y'], B: ['', 'antl'], C: ['221111250004', 's ants'], D: 'MATCHOKGRE LP SCHOOL', G: 'MATCHOKG\nRE', H: '2', I: 'DLT', K: '796828 HPL', L: '1', N: ['Estimated on the\n18.11.2025', 's'], P: '1 Phase', Q: ['19.11.2025', 's g'], R: 'Online Paymen', S: ['532315129741', 's g'], U: ['12241.24', 's'], V: ['2448.25', 'm'], W: ['14689.49', 'm'], X: ['2203.42', 'm'], Y: ['200.00', 'm'] }],
  [253, 'h29', 'sel', { A: ['', 'g edge'], C: ['221111250006', 's'], D: 'RAKME T SANGMA', G: 'MATCHOKG\nRE', H: '2', I: 'DLT', K: '795687 HPL', L: '1', N: ['Estimated on the\n18.11.2025', 's'], P: '1 Phase', Q: ['19.11.2025', 's g'], R: 'Online Paymen', S: ['532316525884', 's g'], U: ['12672.80', 's'], V: ['2534.56', 'm'], W: ['15207.36', 'm'], X: ['2281.10', 'm'], Y: ['200.00', 'm'] }],
  [254, 'h25', 'sel dbl', { A: ['', 'g edge'], C: ['221111250033', 's'], D: 'Bisora Suting', G: '15th mile', H: '2', I: 'DLT', J: '20', N: ['Estimated on the\n19.11.2025', 's'], P: '1 Phase', Q: ['19.11.2025', 's g'], R: 'Online Paymen', S: ['532399436664', 's g'], U: ['12155.33', 's'], V: ['2431.07', 'm'], W: ['14586.40', 'm'], X: ['2187.96', 'm'], Y: ['200.00', 'm'] }],
  [255, 'h13', '', yellow],
  [256, 'h14', '', yellow],
  [257, 'h14', '', yellow],
  [258, 'h14', '', lastEmpty],
  [259, 'h14', 'black', {}],
  [260, 'h60', 'head', { ...labels, M: 'SIM NO' }],
  [261, 'h14', 'sub', letters],
  [262, 'h28', '', { ...yellowA, C: '229-2023kdsd', D: ['As Yunam', 'm'], G: 'Nongspung-B', H: '2', I: 'DLT', J: '40', K: '1217583 (HPL)', L: '1', N: 'Estimate on\n21.05.2025', O: '9387440943', P: '1 Phase', U: ['13190.26', 'm r'], V: ['2638.05', 'm'], W: ['15828.31', 'm r'], X: ['2374.25', 'm'], Y: ['200.00', 'm'] }],
  [263, 'h28', '', { ...yellowA, C: '221305250070', D: ['RURITA SUNGOH', 'm'], G: 'Nongspung-B', H: '2', I: 'DLT', J: '25', K: ' (JPM)', L: '0.03', N: 'Estimate on\n23.05.2025', O: ['8724918254', 'l'], P: '1 Phase', U: ['12414.06', 'm r'], V: ['2482.81', 'm'], W: ['14896.87', 'm r'], X: ['2234.53', 'm'], Y: ['200.00', 'm'] }],
  [264, 'h28', '', { ...yellowA, C: '221306250002', D: ['SABELIN LYNGSHING', 'm'], G: 'Khanapara', H: '5', I: 'DLT', J: '10', K: ' (JPM)', L: '0.03', N: 'Estimate on\n19.08.2025', P: '1 Phase\n(Addl. Mr)', U: ['6953.22', 'm r'], V: ['1390.64', 'm'], W: ['8343.86', 'm r'], X: ['1251.58', 'm'], Y: ['200.00', 'm'] }]
];

function el(parent, tag, cls, text) {
  const node = document.createElement(tag);
  if (cls) node.className = cls;
  if (text) node.textContent = text;
  parent.append(node);
  return node;
}

const grid = document.getElementById('grid');
const group = el(grid, 'colgroup');
el(group, 'col', 'c-head');
cols.forEach(c => el(group, 'col', 'c' + c));

const headRow = el(el(grid, 'thead'), 'tr', 'h13');
el(headRow, 'th', 'all');
cols.forEach(c => { el(headRow, 'th', '', c).scope = 'col'; });

const body = el(grid, 'tbody');
rows.forEach(([num, height, cls, cells]) => {
  const tr = el(body, 'tr', height + ' ' + cls);
  el(tr, 'th', '', String(num)).scope = 'row';
  if (cls === 'date') {
    el(tr, 'td', 'title', '01.11.2025').colSpan = cols.length;
    return;
  }
  cols.forEach(c => {
    if (cls.startsWith('sub') && c < 'U') return;
    const spec = cells[c] ?? '';
    const [text, extra] = Array.isArray(spec) ? spec : [spec, ''];
    const names = [extra];
    if (cls === 'head') {
      names.push('b', c === 'L' ? 'r' : '', c === 'Q' || c === 'S' ? 'y' : '');
      if (c < 'U' && num === 238) names.push('dbl');
    } else if (align[c] && !/\b(ctr|l|r)\b/.test(extra)) names.push(align[c]);
    const td = el(tr, 'td', names.filter(Boolean).join(' '));
    if (cls === 'head' && c < 'U') td.rowSpan = 2;
    if (text) el(td, 'div', 'cell', text);
  });
});
```
